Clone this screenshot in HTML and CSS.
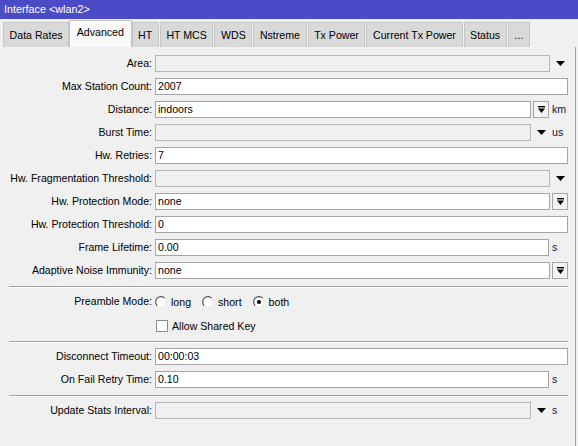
FILE: index.html
```html
<!DOCTYPE html>
<html>
<head>
<meta charset="utf-8">
<link rel="stylesheet" href="styles.css">
</head>
<body>
<div class="window">
  <div class="titlebar">Interface &lt;wlan2&gt;</div>
  <div class="tabs">
    <div class="tab">Data Rates</div>
    <div class="tab active">Advanced</div>
    <div class="tab">HT</div>
    <div class="tab">HT MCS</div>
    <div class="tab">WDS</div>
    <div class="tab">Nstreme</div>
    <div class="tab">Tx Power</div>
    <div class="tab">Current Tx Power</div>
    <div class="tab">Status</div>
    <div class="tab">...</div>
  </div>
  <div class="panel">
    <div class="form">
      <div class="row"><div class="lbl">Area:</div><div class="field"><div class="box off"></div><span class="arrow"><svg width="9" height="5" viewBox="0 0 9 5"><polygon points="0,0 9,0 4.5,5" fill="#000"/></svg></span></div></div>
      <div class="row"><div class="lbl">Max Station Count:</div><div class="field"><div class="box">2007</div></div></div>
      <div class="row"><div class="lbl">Distance:</div><div class="field"><div class="box">indoors</div><span class="btn"><svg width="7" height="7" viewBox="0 0 7 7"><rect x="0" y="0" width="7" height="1.4" fill="#000"/><polygon points="0,2.6 7,2.6 3.5,7" fill="#000"/></svg></span><span class="unit">km</span></div></div>
      <div class="row"><div class="lbl">Burst Time:</div><div class="field"><div class="box off"></div><span class="arrow"><svg width="9" height="5" viewBox="0 0 9 5"><polygon points="0,0 9,0 4.5,5" fill="#000"/></svg></span><span class="unit">us</span></div></div>
      <div class="row"><div class="lbl">Hw. Retries:</div><div class="field"><div class="box">7</div></div></div>
      <div class="row"><div class="lbl">Hw. Fragmentation Threshold:</div><div class="field"><div class="box off"></div><span class="arrow"><svg width="9" height="5" viewBox="0 0 9 5"><polygon points="0,0 9,0 4.5,5" fill="#000"/></svg></span></div></div>
      <div class="row"><div class="lbl">Hw. Protection Mode:</div><div class="field"><div class="box">none</div><span class="btn"><svg width="7" height="7" viewBox="0 0 7 7"><rect x="0" y="0" width="7" height="1.4" fill="#000"/><polygon points="0,2.6 7,2.6 3.5,7" fill="#000"/></svg></span></div></div>
      <div class="row"><div class="lbl">Hw. Protection Threshold:</div><div class="field"><div class="box">0</div></div></div>
      <div class="row"><div class="lbl">Frame Lifetime:</div><div class="field"><div class="box">0.00</div><span class="unit">s</span></div></div>
      <div class="row"><div class="lbl">Adaptive Noise Immunity:</div><div class="field"><div class="box">none</div><span class="btn"><svg width="7" height="7" viewBox="0 0 7 7"><rect x="0" y="0" width="7" height="1.4" fill="#000"/><polygon points="0,2.6 7,2.6 3.5,7" fill="#000"/></svg></span></div></div>

      <div class="sep"></div>

      <div class="row"><div class="lbl">Preamble Mode:</div><div class="field radios">
        <span class="opt"><svg class="radio" width="12" height="12" viewBox="0 0 12 12"><circle cx="6" cy="6" r="5.5" fill="#fff"/><path d="M2.2 9.8 A5.3 5.3 0 0 1 9.8 2.2" fill="none" stroke="#4a4a4a" stroke-width="1.1"/><path d="M9.8 2.2 A5.3 5.3 0 0 1 2.2 9.8" fill="none" stroke="#e2e2e2" stroke-width="1"/></svg>long</span>
        <span class="opt"><svg class="radio" width="12" height="12" viewBox="0 0 12 12"><circle cx="6" cy="6" r="5.5" fill="#fff"/><path d="M2.2 9.8 A5.3 5.3 0 0 1 9.8 2.2" fill="none" stroke="#4a4a4a" stroke-width="1.1"/><path d="M9.8 2.2 A5.3 5.3 0 0 1 2.2 9.8" fill="none" stroke="#e2e2e2" stroke-width="1"/></svg>short</span>
        <span class="opt"><svg class="radio" width="12" height="12" viewBox="0 0 12 12"><circle cx="6" cy="6" r="5.5" fill="#fff"/><path d="M2.2 9.8 A5.3 5.3 0 0 1 9.8 2.2" fill="none" stroke="#4a4a4a" stroke-width="1.1"/><path d="M9.8 2.2 A5.3 5.3 0 0 1 2.2 9.8" fill="none" stroke="#e2e2e2" stroke-width="1"/><circle cx="6" cy="6" r="2" fill="#000"/></svg>both</span>
      </div></div>
      <div class="row check"><div class="lbl"></div><div class="field"><span class="opt"><span class="cb"></span>Allow Shared Key</span></div></div>

      <div class="sep"></div>

      <div class="row"><div class="lbl">Disconnect Timeout:</div><div class="field"><div class="box">00:00:03</div></div></div>
      <div class="row"><div class="lbl">On Fail Retry Time:</div><div class="field"><div class="box">0.10</div><span class="unit">s</span></div></div>

      <div class="sep"></div>

      <div class="row"><div class="lbl">Update Stats Interval:</div><div class="field"><div class="box off"></div><span class="arrow"><svg width="9" height="5" viewBox="0 0 9 5"><polygon points="0,0 9,0 4.5,5" fill="#000"/></svg></span><span class="unit">s</span></div></div>
    </div>
  </div>
</div>
</body>
</html>
```

FILE: styles.css
```css
html, body {
  margin: 0;
  padding: 0;
}
body {
  background: #f0f0f0;
  font-family: "Liberation Sans", Arial, sans-serif;
  font-size: 10.6px;
  color: #000;
}
.window {
  width: 578px;
  height: 446px;
  overflow: hidden;
}
.titlebar {
  height: 19px;
  line-height: 18px;
  background: #4b4bc8;
  color: #fff;
  padding-left: 4px;
  font-size: 10.8px;
  white-space: nowrap;
}
.tabs {
  display: flex;
  align-items: flex-end;
  gap: 1px;
  height: 28px;
  padding-left: 3px;
  box-sizing: border-box;
}
.tab {
  height: 25px;
  box-sizing: border-box;
  border: 1px solid #c6c6c6;
  border-bottom: none;
  background: #d9d9d9;
  padding: 0 5.6px;
  line-height: 24px;
  white-space: nowrap;
}
.tab.active {
  height: 27px;
  background: #f9f9f9;
  border-color: #c2c2c2;
  line-height: 23px;
  margin: 0 -1px;
  padding: 0 6.6px;
}
.panel {
  width: 576px;
  height: 399px;
  box-sizing: border-box;
  border-right: 1px solid #a0a0a0;
  padding-top: 8px;
}
.form {
  display: flex;
  flex-direction: column;
}
.row {
  display: grid;
  grid-template-columns: 152px 413px;
  column-gap: 3px;
  height: 17px;
  margin-top: 6px;
}
.row:first-child {
  margin-top: 0;
}
.row.check {
  margin-top: 7px;
}
.lbl {
  text-align: right;
  line-height: 17px;
  white-space: nowrap;
}
.field {
  display: flex;
  height: 17px;
  align-items: stretch;
}
.box {
  flex: 1;
  min-width: 0;
  height: 17px;
  box-sizing: border-box;
  border: 1px solid #a5a5a5;
  background: #fff;
  padding-left: 2px;
  line-height: 15px;
  white-space: nowrap;
}
.box.off {
  background: #f0f0f0;
  border-color: #b6b6b6;
}
.btn {
  width: 16px;
  height: 17px;
  margin-left: 2px;
  box-sizing: border-box;
  border: 1px solid #a5a5a5;
  background: #f4f4f4;
  display: flex;
  align-items: center;
  justify-content: center;
}
.arrow {
  width: 16px;
  margin-left: 2px;
  display: flex;
  align-items: center;
  justify-content: center;
}
.unit {
  width: 16px;
  margin-left: 3px;
  line-height: 17px;
  color: #10104a;
}
.sep {
  width: 559px;
  height: 0;
  margin: 7px 0 0 9px;
  border-top: 1px solid #a0a0a0;
  border-bottom: 1px solid #ffffff;
}
.sep + .row {
  margin-top: 5px;
}
.radios {
  align-items: center;
  gap: 11px;
}
.opt {
  display: flex;
  align-items: center;
  gap: 4px;
  white-space: nowrap;
}
.radio {
  display: block;
}
.cb {
  width: 12px;
  height: 12px;
  box-sizing: border-box;
  border: 1px solid #8c8c8c;
  background: #fff;
  margin-left: 1px;
}
```
